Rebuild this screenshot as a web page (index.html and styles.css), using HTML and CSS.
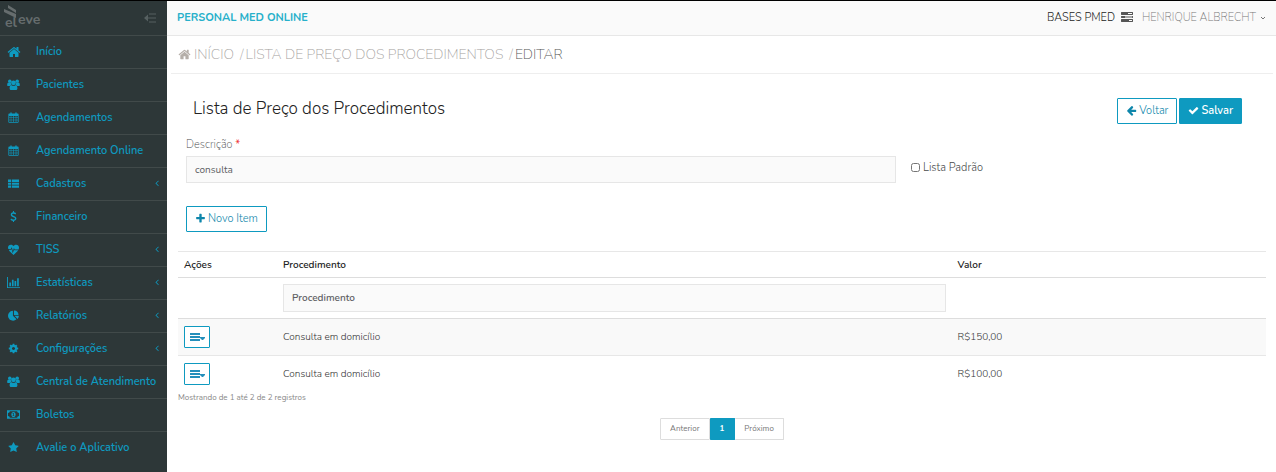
FILE: index.html
```html
<!DOCTYPE html>
<html lang="pt-BR">
<head>
<meta charset="utf-8">
<meta name="viewport" content="width=device-width, initial-scale=1">
<title>Personal Med Online</title>
<link rel="stylesheet" href="styles.css">
</head>
<body>
<svg class="sprite" aria-hidden="true">
  <symbol id="home" viewBox="0 0 1792 1792"><path d="M1472 992v480q0 26-19 45t-45 19h-384v-384h-256v384h-384q-26 0-45-19t-19-45v-480q0-1 .5-3t.5-3l575-474 575 474q1 2 1 6zm223-69l-62 74q-8 9-21 11h-3q-13 0-21-7l-692-577-692 577q-12 8-24 7-13-2-21-11l-62-74q-8-10-7-23.500t11-21.500l719-599q32-26 76-26t76 26l244 204v-195q0-14 9-23t23-9h192q14 0 23 9t9 23v408l219 182q10 8 11 21.500t-7 23.500z"/></symbol>
  <symbol id="users" viewBox="0 0 14 14"><circle cx="3" cy="3.400" r="1.900"/><circle cx="11" cy="3.400" r="1.900"/><path d="M.2 7.800c0-1.800.5-2.900 1.300-2.900 1 .7 2 .7 2.700.4 0 1.100.3 1.900.9 2.500-.9 0-1.600.3-2.100.9H1.300c-.7 0-1.100-.3-1.100-.9zM13.800 7.800c0-1.800-.5-2.900-1.300-2.900-1 .7-2 .7-2.700.4 0 1.100-.3 1.900-.9 2.500.9 0 1.600.3 2.100.9h1.700c.7 0 1.100-.3 1.100-.9z"/><circle cx="7" cy="5.200" r="2.600"/><path d="M2.800 11.200c0-2 .7-3.300 2-3.300 1.400 1.100 3 1.100 4.400 0 1.300 0 2 1.300 2 3.300 0 1-.6 1.600-1.600 1.600H4.400c-1 0-1.600-.6-1.600-1.600z"/></symbol>
  <symbol id="calendar" viewBox="0 0 14 14"><path fill-rule="evenodd" d="M1.500 2H3V1.200C3 .5 3.300.2 3.800.2s.9.300.9 1V2h4.600v-.8c0-.7.300-1 .9-1s.8.300.8 1V2h1.500c.6 0 1 .4 1 1v9.800c0 .6-.4 1-1 1h-11c-.6 0-1-.4-1-1V3c0-.6.400-1 1-1zM1.500 5v2h2V5zm2.700 0v2h2.400V5zm3.200 0v2h2.400V5zm3.200 0v2h1.900V5zM1.500 7.700v2.200h2V7.700zm2.700 0v2.200h2.400V7.700zm3.200 0v2.200h2.400V7.700zm3.200 0v2.200h1.900V7.700zM1.500 10.600v2.200h2v-2.200zm2.700 0v2.200h2.400v-2.200zm3.200 0v2.200h2.400v-2.200zm3.200 0v2.200h1.900v-2.200z"/></symbol>
  <symbol id="list" viewBox="0 0 14 14"><path d="M0 2h4v3H0zM5 2h9v3H5zM0 6h4v2.600H0zM5 6h9v2.600H5zM0 9.600h4v2.800H0zM5 9.600h9v2.800H5z"/></symbol>
  <symbol id="dollar" viewBox="0 0 14 14"><path d="M6.300 0h1.300v1.700c1.100.1 2 .5 2.700 1.100l-.8 1.500c-.8-.6-1.600-.9-2.500-.9-1 0-1.700.5-1.700 1.200 0 .8.600 1.100 2.200 1.700 2 .7 3.200 1.500 3.200 3.300 0 1.600-1.200 2.700-3.100 3V14H6.300v-1.400c-1.300-.1-2.400-.6-3.200-1.400l1-1.500c.9.800 1.800 1.200 2.900 1.200 1.200 0 1.900-.5 1.900-1.300 0-.9-.8-1.200-2.300-1.800C4.700 7.100 3.500 6.400 3.500 4.700c0-1.500 1.100-2.700 2.800-3z"/></symbol>
  <symbol id="heartbeat" viewBox="0 0 14 14"><path d="M7 2.600C5.900 1 4.700.8 3.700.8 1.500.8 0 2.300 0 4.500c0 .7.200 1.300.4 1.900h3.200L4.800 4l1.400 5 1.400-4 .9 2h5c.3-.8.500-1.600.5-2.500C14 2.300 12.500.8 10.300.8 9.300.8 8.100 1 7 2.600z"/><path d="M1 7.400h3.200l.5-1L6 11.800l1.700-4.500.2.700H13c-.3.400-.6.800-1 1.200l-5 4.700-5-4.800c-.4-.4-.8-1-1-1.700z"/></symbol>
  <symbol id="chart" viewBox="0 0 14 14"><path d="M0 1h1v11h13v1H0zM2.500 7h1.800v4H2.500zM5.300 4h1.800v7H5.300zM8.100 5.500h1.800V11H8.100zM10.900 2.500h1.800V11h-1.800z"/></symbol>
  <symbol id="pie" viewBox="0 0 14 14"><path d="M6.300 1v6.300l4.500 4.500A6.300 6.300 0 1 1 6.300 1z"/><path d="M7.600.6A6 6 0 0 1 13.400 6.300H7.600zM8.300 7.400h5.500c0 1.500-.6 2.900-1.700 3.900z"/></symbol>
  <symbol id="cog" viewBox="0 0 1792 1792"><path d="M1152 896q0-106-75-181t-181-75-181 75-75 181 75 181 181 75 181-75 75-181zm512-109v222q0 12-8 23t-20 13l-185 28q-19 54-39 91 35 50 107 138 10 12 10 25t-9 23q-27 37-99 108t-94 71q-12 0-26-9l-138-108q-44 23-91 38-16 136-29 186-7 28-36 28h-222q-14 0-24.500-8.500t-11.500-21.500l-28-184q-49-16-90-37l-141 107q-10 9-25 9-14 0-25-11-126-114-165-168-7-10-7-23 0-12 8-23 15-21 51-66.500t54-70.500q-27-50-41-99l-183-27q-13-2-21-12.500t-8-23.500v-222q0-12 8-23t19-13l186-28q14-46 39-92-40-57-107-138-10-12-10-24 0-10 9-23 26-36 98.500-107.500t94.500-71.500q13 0 26 10l138 107q44-23 91-38 16-136 29-186 7-28 36-28h222q14 0 24.500 8.500t11.500 21.500l28 184q49 16 90 37l142-107q9-9 24-9 13 0 25 10 129 119 165 170 7 8 7 22 0 12-8 23-15 21-51 66.500t-54 70.500q26 50 41 98l183 28q13 2 21 12.500t8 23.500z"/></symbol>
  <symbol id="money" viewBox="0 0 14 14"><path fill-rule="evenodd" d="M0 2.500h14v9H0zM3 3.500c0 1-.8 1.800-2 1.800v3.400c1.200 0 2 .8 2 1.800h8c0-1 .8-1.800 2-1.800V5.300c-1.200 0-2-.8-2-1.800z"/><path fill-rule="evenodd" d="M7 4.200c1.500 0 2.300 1.300 2.300 2.800S8.500 9.800 7 9.800 4.700 8.500 4.700 7 5.500 4.200 7 4.200zM6.700 5.300l-.9.700.4.500.4-.3v1.900h-.7v.6h2v-.6h-.6V5.300z"/></symbol>
  <symbol id="star" viewBox="0 0 1792 1792"><path d="M1728 647q0 22-26 48l-363 354 86 500q1 7 1 20 0 21-10.500 35.500t-30.500 14.500q-19 0-40-12l-449-236-449 236q-22 12-40 12-21 0-31.500-14.500t-10.500-35.500q0-6 2-20l86-500-364-354q-25-27-25-48 0-37 56-46l502-73 225-455q19-41 49-41t49 41l225 455 502 73q56 9 56 46z"/></symbol>
  <symbol id="angle" viewBox="0 0 1792 1792"><path d="M1203 544q0 13-10 23l-393 393 393 393q10 10 10 23t-10 23l-50 50q-10 10-23 10t-23-10l-466-466q-10-10-10-23t10-23l466-466q10-10 23-10t23 10l50 50q10 10 10 23z"/></symbol>
  <symbol id="arrow" viewBox="0 0 1792 1792"><path d="M1664 896v128q0 53-32.500 90.500t-84.500 37.500h-704l293 294q38 36 38 90t-38 90l-75 76q-37 37-90 37-52 0-91-37l-651-652q-37-37-37-90 0-52 37-91l651-650q38-38 91-38 52 0 90 38l75 74q38 38 38 91t-38 91l-293 293h704q52 0 84.500 37.500t32.500 90.500z"/></symbol>
  <symbol id="check" viewBox="0 0 1792 1792"><path d="M1671 566q0 40-28 68l-724 724-136 136q-28 28-68 28t-68-28l-136-136-362-362q-28-28-28-68t28-68l136-136q28-28 68-28t68 28l294 295 656-657q28-28 68-28t68 28l136 136q28 28 28 68z"/></symbol>
  <symbol id="plus" viewBox="0 0 1792 1792"><path d="M1600 736v192q0 40-28 68t-68 28h-416v416q0 40-28 68t-68 28h-192q-40 0-68-28t-28-68v-416h-416q-40 0-68-28t-28-68v-192q0-40 28-68t68-28h416v-416q0-40 28-68t68-28h192q40 0 68 28t28 68v416h416q40 0 68 28t28 68z"/></symbol>
  <symbol id="tasks" viewBox="0 0 12 12"><path fill-rule="evenodd" d="M.5 1h11c.3 0 .5.200.5.500v2c0 .3-.2.500-.5.500H.5C.2 4 0 3.800 0 3.500v-2C0 1.200.2 1 .5 1zM7 2v1h4V2zM.5 5h11c.3 0 .5.200.5.500v1c0 .3-.2.500-.5.500H.5C.2 7 0 6.800 0 6.500v-1C0 5.200.2 5 .5 5zM4 5.500v1h7v-1zM.5 8h11c.3 0 .5.200.5.500v2c0 .3-.2.500-.5.500H.5c-.3 0-.5-.2-.5-.5v-2C0 8.200.2 8 .5 8zM8 9v1h3V9z"/></symbol>
  <symbol id="menu" viewBox="0 0 16 9"><path d="M0 0h10v2H0zM0 3h10v2H0zM0 6h10v2H0zM10 4h5v1l-2 2h-1l-2-2z"/></symbol>
</svg>

<div class="app">
  <aside class="sidebar">
    <div class="brand">
      <svg class="logo" viewBox="0 0 40 26" role="img" aria-label="eleve">
        <path d="M5 0l8 5v3L5 3zM1 4l12 5v4L1 7z"/>
        <text x="2" y="22">el</text><text x="15" y="19">eve</text>
      </svg>
      <button class="collapse" aria-label="Recolher menu"><svg viewBox="0 0 12 10"><path d="M5 .5h7v1H5zM3 4.500h9v1H3zM5 8.500h7v1H5zM0 5l4-3.500v7z"/></svg></button>
    </div>
    <nav class="nav">
      <a href="#"><svg class="icon large"><use href="#home"/></svg>Início</a>
      <a href="#"><svg class="icon"><use href="#users"/></svg>Pacientes</a>
      <a href="#"><svg class="icon small"><use href="#calendar"/></svg>Agendamentos</a>
      <a href="#"><svg class="icon small"><use href="#calendar"/></svg>Agendamento Online</a>
      <a href="#"><svg class="icon small"><use href="#list"/></svg>Cadastros<svg class="angle"><use href="#angle"/></svg></a>
      <a href="#"><svg class="icon small"><use href="#dollar"/></svg>Financeiro</a>
      <a href="#"><svg class="icon small"><use href="#heartbeat"/></svg>TISS<svg class="angle"><use href="#angle"/></svg></a>
      <a href="#"><svg class="icon"><use href="#chart"/></svg>Estatísticas<svg class="angle"><use href="#angle"/></svg></a>
      <a href="#"><svg class="icon small"><use href="#pie"/></svg>Relatórios<svg class="angle"><use href="#angle"/></svg></a>
      <a href="#"><svg class="icon small"><use href="#cog"/></svg>Configurações<svg class="angle"><use href="#angle"/></svg></a>
      <a href="#"><svg class="icon"><use href="#users"/></svg>Central de Atendimento</a>
      <a href="#"><svg class="icon"><use href="#money"/></svg>Boletos</a>
      <a href="#"><svg class="icon small"><use href="#star"/></svg>Avalie o Aplicativo</a>
    </nav>
  </aside>

  <div class="page">
    <header class="topbar">
      <a class="product" href="#">PERSONAL MED ONLINE</a>
      <span class="base">BASES PMED</span>
      <svg class="tasks"><use href="#tasks"/></svg>
      <button class="user">HENRIQUE ALBRECHT<svg class="caret" viewBox="0 0 6 6"><path d="M1 2l2 2 2-2"/></svg></button>
    </header>
    <nav class="crumbs" aria-label="Trilha">
      <svg class="icon"><use href="#home"/></svg>
      <a href="#">INÍCIO</a><span class="slash">/</span><a href="#">LISTA DE PREÇO DOS PROCEDIMENTOS</a><span class="slash">/</span><span class="current">EDITAR</span>
    </nav>

    <main class="content">
      <div class="heading">
        <h1>Lista de Preço dos Procedimentos</h1>
        <div class="actions">
          <button class="btn"><svg><use href="#arrow"/></svg>Voltar</button>
          <button class="btn primary"><svg><use href="#check"/></svg>Salvar</button>
        </div>
      </div>
      <form class="form">
        <div class="field">
          <label for="descricao">Descrição <span class="required">*</span></label>
          <input class="text" id="descricao" type="text" value="consulta">
        </div>
        <label class="check"><input type="checkbox">Lista Padrão</label>
      </form>
      <button class="btn new"><svg><use href="#plus"/></svg>Novo Item</button>

      <table class="table">
        <colgroup><col class="col-actions"><col class="col-name"><col></colgroup>
        <thead>
          <tr><th>Ações</th><th>Procedimento</th><th>Valor</th></tr>
          <tr class="filter"><td></td><td><input class="text" type="text" placeholder="Procedimento" aria-label="Procedimento"></td><td></td></tr>
        </thead>
        <tbody>
          <tr><td><button class="row-menu" aria-label="Ações"><svg><use href="#menu"/></svg></button></td><td>Consulta em domicílio</td><td>R$150,00</td></tr>
          <tr><td><button class="row-menu" aria-label="Ações"><svg><use href="#menu"/></svg></button></td><td>Consulta em domicílio</td><td>R$100,00</td></tr>
        </tbody>
      </table>
      <p class="info">Mostrando de 1 até 2 de 2 registros</p>
      <nav class="pager" aria-label="Paginação">
        <a href="#">Anterior</a><a class="active" href="#">1</a><a href="#">Próximo</a>
      </nav>
    </main>
  </div>
</div>
</body>
</html>
```

FILE: styles.css
```css
* { box-sizing: border-box; }
body {
  margin: 0;
  font-family: Nunito, "Noto Sans", "Open Sans", sans-serif;
  font-size: 10px;
  line-height: 14px;
  color: #48494b;
  background: #fff;
}
a { color: inherit; text-decoration: none; }
button, input { font: inherit; color: inherit; margin: 0; }
button { cursor: pointer; }
svg { fill: currentColor; flex: none; }
.sprite { display: none; }

.app { display: flex; min-height: 100vh; border-top: 1px solid #000; }
.sidebar { width: 167px; flex: none; background: #2d3738; color: #0e9ac0; }
.brand {
  display: flex;
  align-items: center;
  justify-content: space-between;
  height: 34px;
  padding: 0 11px 0 3px;
  color: #666d6e;
}
.logo { width: 40px; height: 26px; }
.logo text { font: bold 14px Nunito, "Noto Sans", sans-serif; }
.collapse { display: flex; padding: 0; border: 0; background: none; color: #566061; }
.collapse svg { width: 12px; height: 10px; }
.nav a {
  display: flex;
  align-items: center;
  height: 33px;
  padding: 0 5px 0 7px;
  border-top: 1px solid #414a4a;
  font-size: 11px;
  font-weight: 600;
}
.nav .icon { width: 13px; height: 13px; margin: 0 16px 2px 0; }
.nav .small { width: 11px; height: 11px; margin: 0 17px 1px 1px; }
.nav .large { width: 14px; height: 14px; margin: 0 15px 1px 0; }
.nav .angle { width: 10px; height: 10px; margin: 0 0 2px auto; }

.page { flex: 1; min-width: 0; }
.topbar {
  display: flex;
  align-items: center;
  height: 35px;
  padding: 0 10px;
  background: #fafafa;
  border-bottom: 1px solid #e7e7e7;
  font-size: 11px;
}
.product { margin-right: auto; color: #27b0ca; font-weight: 700; }
.base { color: #222; font-weight: 300; }
.tasks { width: 12px; height: 12px; margin: 0 9px 3px 6px; color: #555; }
.user { display: flex; align-items: center; gap: 4px; padding: 0; border: 0; background: none; color: #777; font-weight: 200; }
.caret { width: 6px; height: 6px; fill: none; stroke: #777; }

.crumbs {
  display: flex;
  align-items: center;
  height: 38px;
  margin: 0 3px 0 4px;
  padding: 0 7px;
  border-bottom: 1px solid #eee;
  color: #a5a2a0;
  font-size: 14px;
  font-weight: 200;
}
.crumbs .icon { width: 13px; height: 13px; margin-right: 3px; color: #b5afa9; }
.slash { margin: 0 2px 0 6px; }
.current { color: #555; }

.content { padding: 24px 10px 0 11px; }
.heading { display: flex; justify-content: space-between; padding: 0 24px 0 15px; }
h1 { margin: 0; font-size: 17px; line-height: 22px; font-weight: 300; color: #222; }
.actions { display: flex; gap: 2px; }
.btn {
  display: inline-flex;
  align-items: center;
  justify-content: center;
  gap: 2px;
  height: 26px;
  padding: 0 8px;
  border: 1px solid #0e9ac0;
  border-radius: 1px;
  background: #fff;
  color: #0e86ab;
  font-size: 11px;
  font-weight: 300;
}
.btn svg { width: 11px; height: 11px; margin-bottom: 2px; }
.primary { background: #0e9ac0; color: #fff; font-weight: 600; }
.form { display: grid; grid-template-columns: 2fr 1fr; column-gap: 15px; padding: 12px 0 0 8px; }
.field label { display: block; height: 20px; line-height: 18px; font-size: 11px; font-weight: 200; }
.required { color: #e33; font-weight: 400; }
.text {
  display: block;
  width: 100%;
  height: 27px;
  padding: 0 8px;
  border: 1px solid #e6e6e6;
  border-radius: 0;
  background: #fafafa;
  color: #606064;
}
.check { display: flex; align-items: center; gap: 3px; height: 24px; margin-top: 20px; font-size: 11px; font-weight: 300; }
.check input { width: 9px; height: 9px; margin-bottom: 1px; }
.new { display: flex; width: max-content; margin: 23px 0 19px 8px; }

.table { width: 100%; table-layout: fixed; border-collapse: collapse; border-top: 1px solid #e7e7e7; }
.col-actions { width: 9.1%; }
.col-name { width: 62%; }
.table th, .table td { padding: 0 6px; text-align: left; vertical-align: middle; }
.table th { height: 26px; font-weight: 600; color: #222; }
.table thead tr { border-bottom: 1px solid #ddd; }
.table .filter td { height: 41px; }
.table .filter .text { height: 28px; font-weight: 600; }
.filter .text::placeholder { color: #606064; opacity: 1; }
.table tbody td { height: 37px; font-weight: 300; color: #333; }
.table tbody tr:first-child { background: #f9f9f9; border-bottom: 1px solid #e7e7e7; }
.row-menu {
  display: flex;
  align-items: center;
  width: 26px;
  height: 22px;
  padding: 0 4px 0 5px;
  border: 1px solid #0e9ac0;
  border-radius: 1px;
  background: #fff;
  color: #258fbb;
}
.row-menu svg { width: 16px; height: 9px; }
.info { margin: 0; line-height: 10px; font-size: 8px; color: #888; }
.pager { display: flex; justify-content: center; margin-top: 15px; font-size: 8px; color: #777; }
.pager a { display: flex; align-items: center; height: 22px; padding: 0 9px; border: 1px solid #ddd; border-radius: 1px; }
.pager .active { padding: 0 10px; border-color: #0e9ac0; background: #0e9ac0; color: #fff; font-weight: 700; }
.pager a + a { border-left: 0; }
```
